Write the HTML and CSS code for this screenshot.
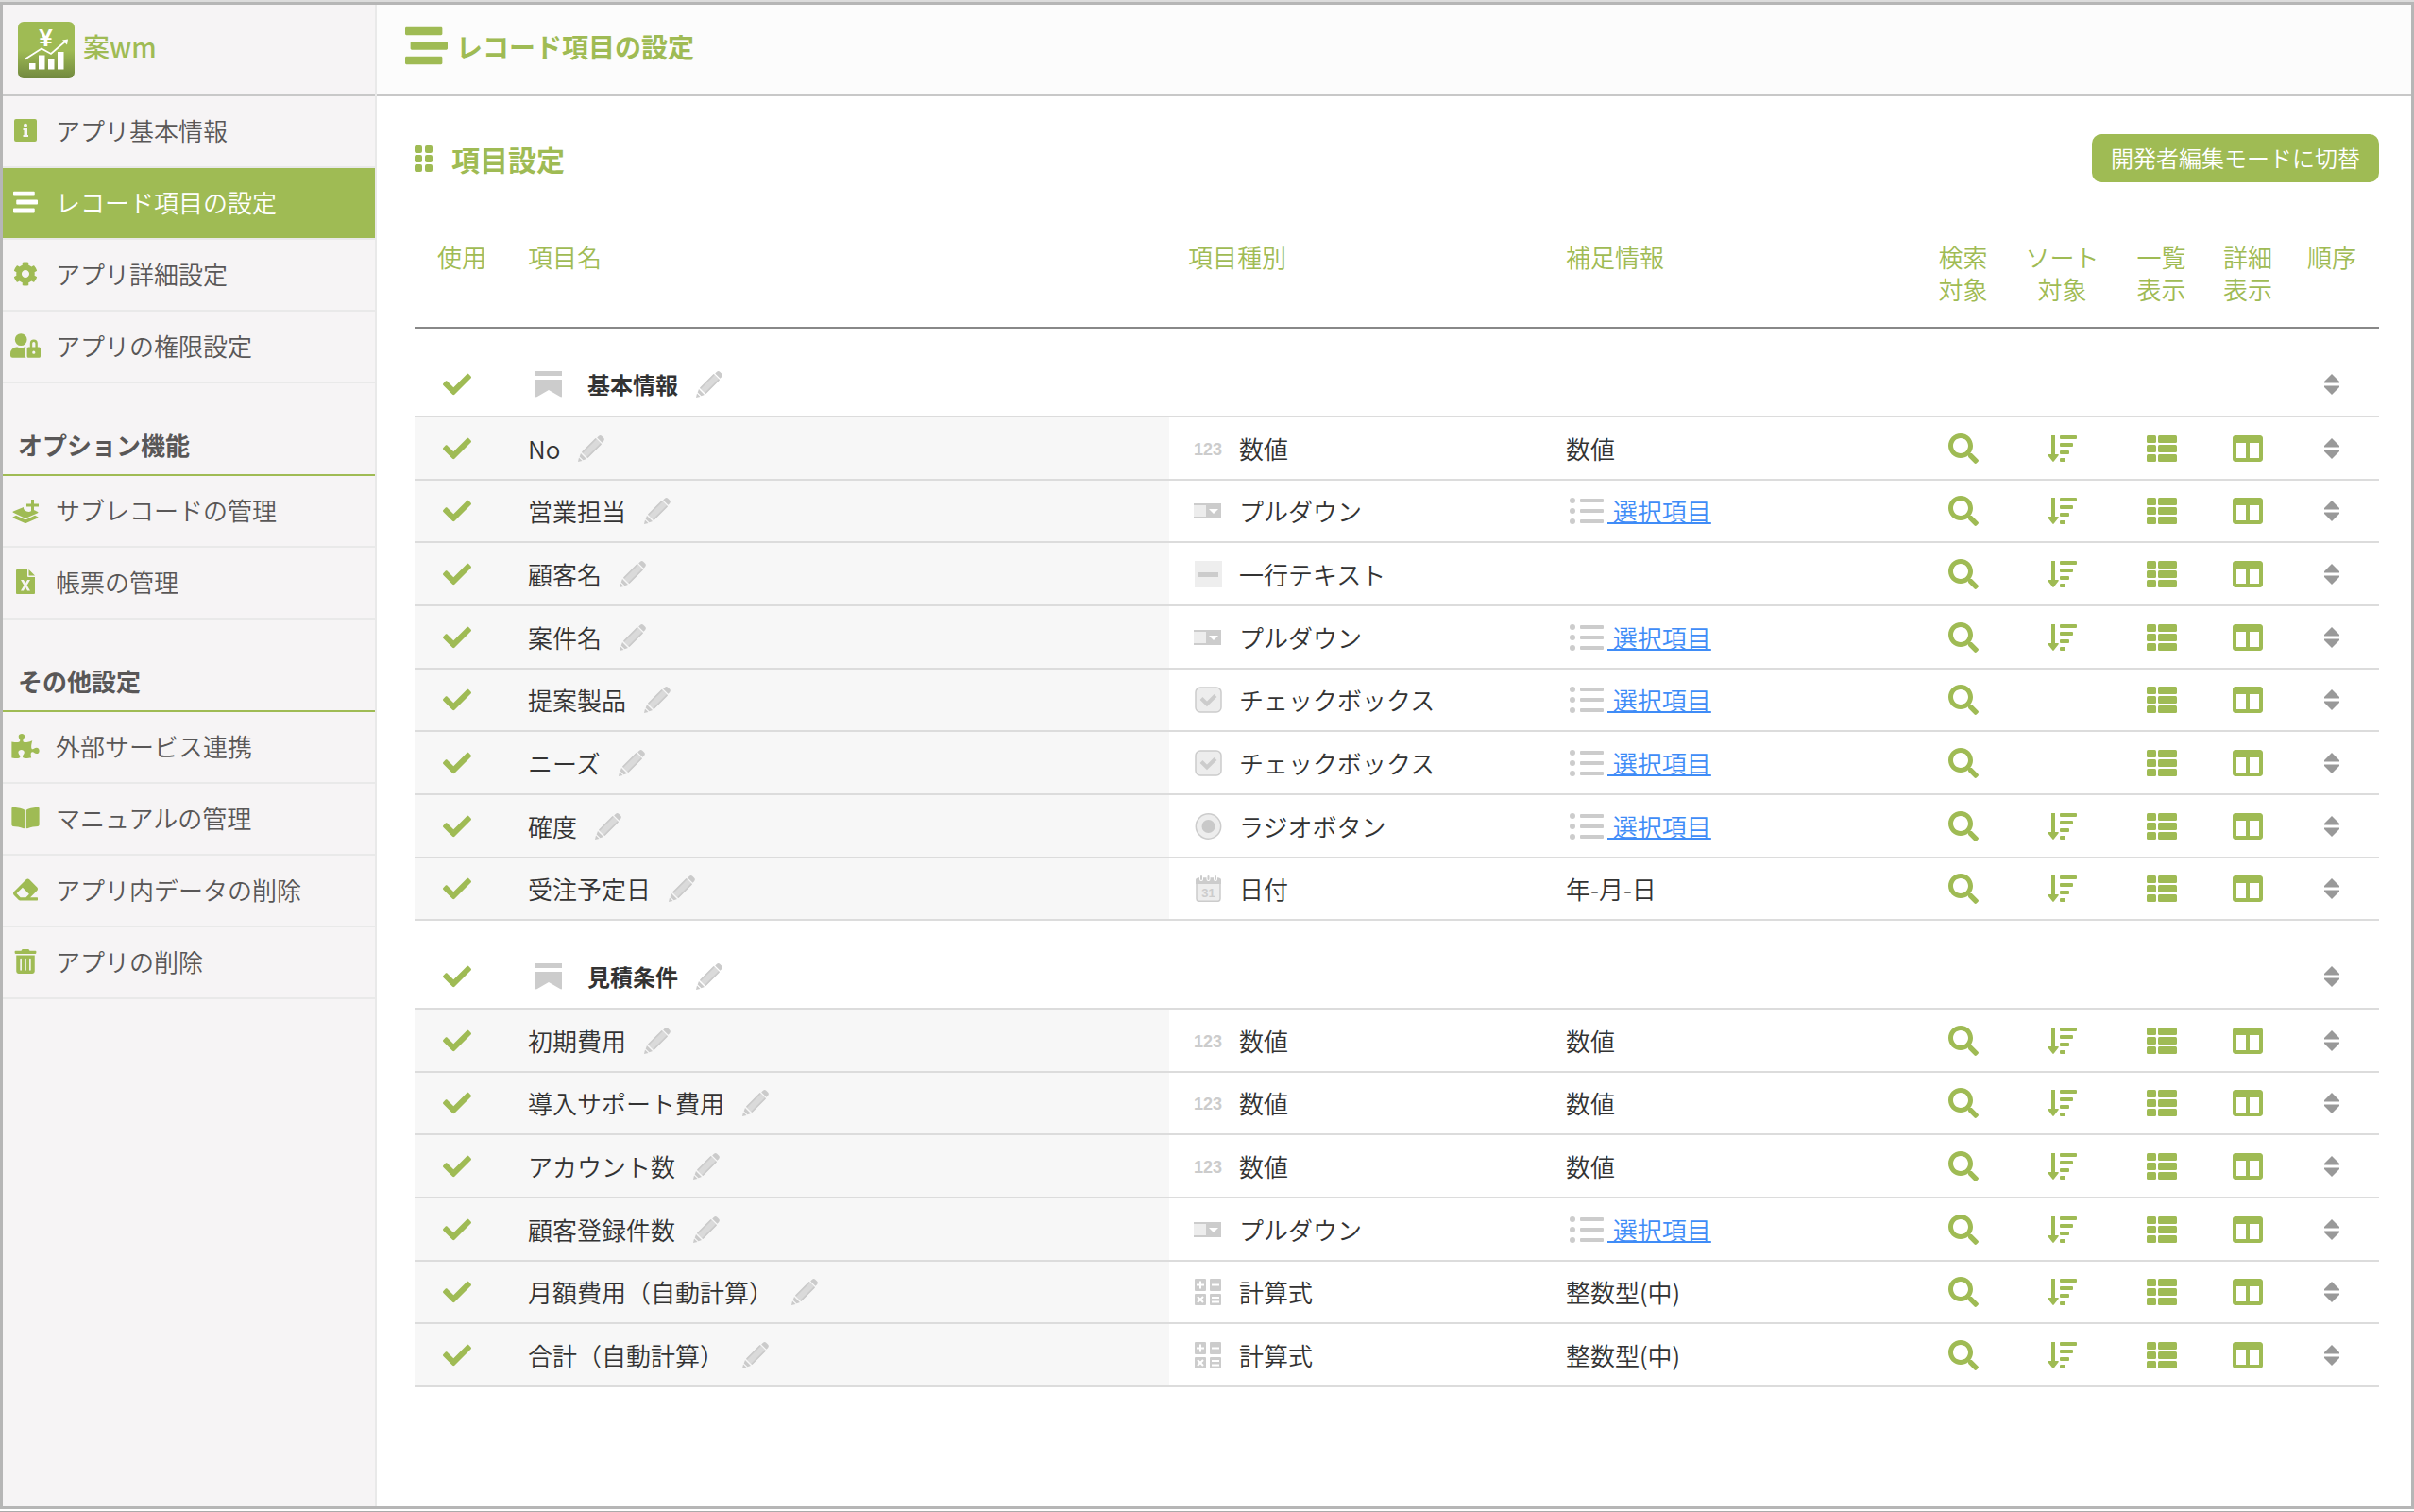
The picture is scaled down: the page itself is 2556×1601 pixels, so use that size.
FILE: index.html
```html
<!DOCTYPE html>
<html lang="ja">
  <head>
    <meta charset="UTF-8" />
    <meta name="viewport" content="width=device-width, initial-scale=1.0" />
    <title>レコード項目の設定</title>
    <link rel="stylesheet" href="styles.css">
  </head>
  <body>
    <!-- Icon definitions -->
    <svg class="icon-defs" aria-hidden="true">
      <symbol id="check" viewBox="0 0 512 512"><path d="M173.898 439.404l-166.4-166.4c-9.997-9.997-9.997-26.206 0-36.204l36.203-36.204c9.997-9.998 26.207-9.998 36.204 0L192 312.69 432.095 72.596c9.997-9.997 26.207-9.997 36.204 0l36.203 36.204c9.997 9.997 9.997 26.206 0 36.204l-294.4 294.401c-9.998 9.997-26.207 9.997-36.204-.001z"/></symbol>
      <symbol id="stream" viewBox="0 0 512 512"><path d="M16 128h416c8.84 0 16-7.16 16-16V48c0-8.84-7.16-16-16-16H16C7.16 32 0 39.16 0 48v64c0 8.84 7.16 16 16 16zm480 80H80c-8.84 0-16 7.16-16 16v64c0 8.84 7.16 16 16 16h416c8.84 0 16-7.16 16-16v-64c0-8.84-7.16-16-16-16zm-64 176H16c-8.84 0-16 7.16-16 16v64c0 8.84 7.16 16 16 16h416c8.84 0 16-7.16 16-16v-64c0-8.84-7.16-16-16-16z"/></symbol>
      <symbol id="info" viewBox="0 0 24 24"><path fill-rule="evenodd" d="M2 0h20a2 2 0 0 1 2 2v20a2 2 0 0 1-2 2H2a2 2 0 0 1-2-2V2a2 2 0 0 1 2-2zM12 4.800a2 2 0 1 0 0 4 2 2 0 0 0 0-4zM9.500 10v2h1v5h-1v2h5.500v-2h-1v-7z"/></symbol>
      <symbol id="cog" viewBox="0 0 512 512"><path d="M487.4 315.7l-42.6-24.6c4.3-23.2 4.3-47 0-70.2l42.6-24.6c4.9-2.8 7.1-8.6 5.5-14-11.1-35.6-30-67.8-54.7-94.6-3.8-4.1-10-5.1-14.8-2.3L380.8 110c-17.9-15.4-38.5-27.3-60.8-35.1V25.8c0-5.6-3.9-10.5-9.4-11.7-36.7-8.2-74.3-7.8-109.2 0-5.5 1.200-9.400 6.100-9.400 11.700V75c-22.200 7.900-42.800 19.800-60.800 35.100L88.700 85.500c-4.900-2.800-11-1.900-14.800 2.300-24.700 26.700-43.600 58.900-54.700 94.600-1.700 5.400.6 11.200 5.500 14L67.300 221c-4.300 23.200-4.300 47 0 70.200l-42.600 24.600c-4.900 2.800-7.100 8.600-5.500 14 11.100 35.600 30 67.800 54.700 94.600 3.800 4.100 10 5.100 14.800 2.300l42.600-24.600c17.900 15.400 38.500 27.300 60.800 35.100v49.200c0 5.600 3.900 10.500 9.400 11.700 36.700 8.200 74.300 7.800 109.200 0 5.500-1.200 9.400-6.100 9.400-11.700v-49.200c22.200-7.900 42.800-19.800 60.800-35.100l42.600 24.600c4.900 2.800 11 1.900 14.800-2.300 24.700-26.700 43.600-58.900 54.700-94.600 1.500-5.500-.7-11.300-5.600-14.100zM256 336c-44.100 0-80-35.900-80-80s35.900-80 80-80 80 35.900 80 80-35.900 80-80 80z"/></symbol>
      <symbol id="user-lock" viewBox="0 0 640 512"><path d="M224 256A128 128 0 1 0 96 128a128 128 0 0 0 128 128zm96 64a63.08 63.08 0 0 1 8.1-30.5c-4.8-.5-9.5-1.5-14.5-1.5h-16.7a174.08 174.08 0 0 1-145.8 0h-16.7A134.43 134.43 0 0 0 0 422.4V464a48 48 0 0 0 48 48h280.9a63.54 63.54 0 0 1-8.9-32zm288-32h-32v-80a80 80 0 0 0-160 0v80h-32a32 32 0 0 0-32 32v160a32 32 0 0 0 32 32h224a32 32 0 0 0 32-32V320a32 32 0 0 0-32-32zM496 432a32 32 0 1 1 32-32 32 32 0 0 1-32 32zm32-144h-64v-80a32 32 0 0 1 64 0z"/></symbol>
      <symbol id="layers" viewBox="0 0 28 28"><path d="M1 15.500 12 11c-.5 3 3 5.500 7 4.800l3-2.300 5 2.500c.6.4.6.8 0 1.200l-12 5.300c-.6.3-1.400.3-2 0L1 16.700c-.6-.4-.6-.8 0-1.200zM4 19.800l8.500 4c1 .4 2 .4 3 0l8.500-4 3 1.400c.6.4.6.8 0 1.200L15 27.700c-.6.3-1.400.3-2 0L1 22.400c-.6-.4-.6-.8 0-1.200zM20 3h3v4.500h5v3h-5V15h-3v-4.500h-5v-3h5z"/></symbol>
      <symbol id="excel" viewBox="0 0 20 26"><path fill-rule="evenodd" d="M1 0h11v7a1 1 0 0 0 1 1h7v17a1 1 0 0 1-1 1H1a1 1 0 0 1-1-1V1a1 1 0 0 1 1-1zM5 11l3.400 5.700L5 22.500h3l2-3.700 2 3.700h3l-3.400-5.800L15 11h-3l-2 3.500L8 11z"/><path d="M13.500 0 20 6.500h-6.500z"/></symbol>
      <symbol id="puzzle" viewBox="0 0 576 512"><path d="M519.442 288.651c-41.519 0-59.5 31.593-82.058 31.593C377.409 320.244 432 144 432 144s-196.288 80-196.288-3.297c0-35.827 36.288-46.25 36.288-85.985C272 19.216 243.885 0 210.539 0c-34.654 0-66.366 18.891-66.366 56.346 0 41.364 31.711 59.277 31.711 81.750C175.885 207.719 0 166.758 0 166.758v333.237s178.635 41.047 178.635-28.662c0-22.473-40-40.107-40-81.471 0-37.456 29.250-56.346 63.577-56.346 33.673 0 61.788 19.216 61.788 54.717 0 39.735-36.288 50.158-36.288 85.985 0 60.803 129.675 25.730 181.230 25.730 0 0-34.725-120.101 25.827-120.101 35.962 0 46.423 36.152 86.308 36.152C556.712 416 576 387.990 576 354.443c0-34.199-18.962-65.792-56.558-65.792z"/></symbol>
      <symbol id="book" viewBox="0 0 576 512"><path d="M542.22 32.05c-54.8 3.11-163.72 14.43-230.96 55.59-4.64 2.84-7.27 7.89-7.27 13.17v363.87c0 11.55 12.63 18.85 23.28 13.49 69.18-34.82 169.23-44.32 218.7-46.92 16.89-.89 30.02-14.43 30.02-30.66V62.75c.01-17.71-15.35-31.74-33.77-30.7zM264.73 87.64C197.5 46.48 88.58 35.17 33.78 32.05 15.36 31.01 0 45.04 0 62.75V400.6c0 16.24 13.13 29.78 30.02 30.66 49.49 2.6 149.59 12.11 218.77 46.95 10.62 5.35 23.21-1.94 23.21-13.46V100.63c0-5.29-2.62-10.14-7.27-12.99z"/></symbol>
      <symbol id="eraser" viewBox="0 0 512 512"><path d="M497.941 273.941c18.745-18.745 18.745-49.137 0-67.882l-160-160c-18.745-18.745-49.136-18.746-67.883 0l-256 256c-18.745 18.745-18.745 49.137 0 67.882l96 96A48.004 48.004 0 0 0 144 480h356c6.627 0 12-5.373 12-12v-40c0-6.627-5.373-12-12-12H355.883l142.058-142.059zm-302.627-62.627l137.373 137.373L265.373 416H150.628l-80-80 124.686-124.686z"/></symbol>
      <symbol id="trash" viewBox="0 0 448 512"><path d="M32 464a48 48 0 0 0 48 48h288a48 48 0 0 0 48-48V128H32zm272-256a16 16 0 0 1 32 0v224a16 16 0 0 1-32 0zm-96 0a16 16 0 0 1 32 0v224a16 16 0 0 1-32 0zm-96 0a16 16 0 0 1 32 0v224a16 16 0 0 1-32 0zM432 32H312l-9.4-18.7A24 24 0 0 0 281.1 0H166.8a23.720 23.720 0 0 0-21.400 13.300L136 32H16A16 16 0 0 0 0 48v32a16 16 0 0 0 16 16h416a16 16 0 0 0 16-16V48a16 16 0 0 0-16-16z"/></symbol>
      <symbol id="grip" viewBox="0 0 20 28"><rect width="8" height="8" rx="2"/><rect x="11" width="8" height="8" rx="2"/><rect y="10" width="8" height="8" rx="2"/><rect x="11" y="10" width="8" height="8" rx="2"/><rect y="20" width="8" height="8" rx="2"/><rect x="11" y="20" width="8" height="8" rx="2"/></symbol>
      <symbol id="bookmark" viewBox="0 0 28 28"><path d="M0 0h28v5H0zM0 9h28v17.500c0 .8-.8 1.200-1.500.8L14 20 1.500 27.300c-.7.4-1.500 0-1.500-.8z"/></symbol>
      <symbol id="pencil" viewBox="0 0 28 28"><path fill="#dadada" d="M4 18 19 3l6 6-15 15z"/><path fill="#cbcbcb" d="M4 17.500 18.500 3l1.200 1.200L5.200 18.700zM9.300 22.800 23.800 8.300l1.200 1.200L10.500 24zM20.200 2.500 22 .8c1-1 2.300-1 3.200 0l2 2c.9.900.9 2.200 0 3.200l-1.700 1.800zM3 19l6 6-3.500 1.200-3.800-3.700zM1 23.500 4.500 27 0 28z"/></symbol>
      <symbol id="pulldown" viewBox="0 0 30 28"><path fill="#ccc" d="M0 6h29v16H0z"/><path fill="#ededed" d="M0 8h13v12H0z"/><path fill="#fff" d="M16 12h10l-5 5z"/></symbol>
      <symbol id="textline" viewBox="0 0 30 28"><path fill="#eee" d="M1 0h29v28H1z"/><path fill="#ccc" d="M4 12h22v5H4z"/></symbol>
      <symbol id="checkbox" viewBox="0 0 30 28"><rect x="2" y="1" width="27" height="26" rx="5" fill="#ededed" stroke="#ccc" stroke-width="1.500"/><path fill="none" stroke="#ccc" stroke-width="4" d="m8 12.500 6 6 9-9"/></symbol>
      <symbol id="radio" viewBox="0 0 30 28"><circle cx="15.500" cy="14" r="13.200" fill="#ededed" stroke="#ccc" stroke-width="1.500"/><circle cx="15.500" cy="14" r="7" fill="#c9c9c9"/></symbol>
      <symbol id="formula" viewBox="0 0 30 28"><path fill="#ccc" d="M2 0h10a1 1 0 0 1 1 1v11a1 1 0 0 1-1 1H2a1 1 0 0 1-1-1V1a1 1 0 0 1 1-1zM18 0h10a1 1 0 0 1 1 1v11a1 1 0 0 1-1 1H18a1 1 0 0 1-1-1V1a1 1 0 0 1 1-1zM2 16h10a1 1 0 0 1 1 1v10a1 1 0 0 1-1 1H2a1 1 0 0 1-1-1V17a1 1 0 0 1 1-1zM18 16h10a1 1 0 0 1 1 1v10a1 1 0 0 1-1 1H18a1 1 0 0 1-1-1V17a1 1 0 0 1 1-1z"/><path stroke="#fff" stroke-width="2" d="M3 6.500h8M7 2.500v8M19 6.500h8M4 19l6 6M10 19l-6 6M19 20h8M19 24.500h8"/></symbol>
      <symbol id="options" viewBox="0 0 36 28"><circle cx="3" cy="3" r="3"/><circle cx="3" cy="14" r="3"/><circle cx="3" cy="25" r="3"/><rect x="11" y="1" width="25" height="4" rx="1"/><rect x="11" y="12" width="25" height="4" rx="1"/><rect x="11" y="23" width="25" height="4" rx="1"/></symbol>
      <symbol id="search" viewBox="0 0 512 512"><path d="M505 442.700L405.300 343c-4.500-4.500-10.600-7-17-7H372c27.600-35.300 44-79.700 44-128C416 93.100 322.900 0 208 0S0 93.100 0 208s93.100 208 208 208c48.300 0 92.700-16.400 128-44v16.300c0 6.400 2.500 12.500 7 17l99.700 99.700c9.400 9.400 24.600 9.400 33.900 0l28.300-28.300c9.400-9.400 9.400-24.600.1-34zM208 336c-70.700 0-128-57.200-128-128 0-70.700 57.200-128 128-128 70.700 0 128 57.200 128 128 0 70.700-57.200 128-128 128z"/></symbol>
      <symbol id="sort" viewBox="0 0 32 32"><path d="M4 2h4v20h3c.8 0 1 .7.600 1.200L6.700 29.500c-.4.500-1 .5-1.400 0L.4 23.200C0 22.700.2 22 1 22h3z"/><rect x="13" y="2" width="18" height="4" rx="1"/><rect x="13" y="10" width="14" height="4" rx="1"/><rect x="13" y="18" width="10" height="4" rx="1"/><rect x="13" y="26" width="6" height="4" rx="1"/></symbol>
      <symbol id="list" viewBox="0 0 32 32"><rect y="2" width="10" height="8" rx="1.500"/><rect x="12" y="2" width="20" height="8" rx="1.500"/><rect y="12" width="10" height="8" rx="1.500"/><rect x="12" y="12" width="20" height="8" rx="1.500"/><rect y="22" width="10" height="8" rx="1.500"/><rect x="12" y="22" width="20" height="8" rx="1.500"/></symbol>
      <symbol id="columns" viewBox="0 0 512 512"><path d="M464 32H48C21.490 32 0 53.490 0 80v352c0 26.510 21.490 48 48 48h416c26.510 0 48-21.490 48-48V80c0-26.510-21.490-48-48-48zM224 416H64V160h160v256zm224 0H288V160h160v256z"/></symbol>
      <symbol id="order" viewBox="0 0 16 22"><path d="M8 0l8 8v1.500H0V8zM0 12.500h16V14l-8 8-8-8z"/></symbol>
    </svg>

    <div class="frame">
      <aside class="sidebar">
        <div class="brand">
          <svg class="logo" viewBox="0 0 60 60" aria-hidden="true">
            <defs>
              <linearGradient id="logo-bg" x1="0" y1="0" x2="0" y2="1">
                <stop offset="0.5" stop-color="#9fbb54"/>
                <stop offset="1" stop-color="#72893f"/>
              </linearGradient>
            </defs>
            <rect width="60" height="60" rx="6" fill="url(#logo-bg)"/>
            <text class="yen" x="29.500" y="26" text-anchor="middle">¥</text>
            <path fill="none" stroke="#fff" stroke-width="1.800" d="m7 40 18-11.500 10 5.500 15-13"/>
            <path fill="#fff" d="m47 19.500 6-1-1 6zM12 44h6.500v6.500H12zM22 35.500h6.500v15H22zM32 39h6.500v11.500H32zM42 32h6.500v18.500H42z"/>
          </svg>
          <span class="brand-name">案wm</span>
        </div>
        <nav>
          <a href="#"><span class="nav-icon"><svg class="i24"><use href="#info"/></svg></span>アプリ基本情報</a>
          <a href="#" class="active" aria-current="page"><span class="nav-icon"><svg class="i26"><use href="#stream"/></svg></span>レコード項目の設定</a>
          <a href="#"><span class="nav-icon"><svg class="i26"><use href="#cog"/></svg></span>アプリ詳細設定</a>
          <a href="#"><span class="nav-icon"><svg class="wide"><use href="#user-lock"/></svg></span>アプリの権限設定</a>
          <h2>オプション機能</h2>
          <a href="#"><span class="nav-icon"><svg class="i28"><use href="#layers"/></svg></span>サブレコードの管理</a>
          <a href="#"><span class="nav-icon"><svg class="i26"><use href="#excel"/></svg></span>帳票の管理</a>
          <h2>その他設定</h2>
          <a href="#"><span class="nav-icon"><svg class="wide"><use href="#puzzle"/></svg></span>外部サービス連携</a>
          <a href="#"><span class="nav-icon"><svg class="wide"><use href="#book"/></svg></span>マニュアルの管理</a>
          <a href="#"><span class="nav-icon"><svg class="i26"><use href="#eraser"/></svg></span>アプリ内データの削除</a>
          <a href="#"><span class="nav-icon"><svg class="i26"><use href="#trash"/></svg></span>アプリの削除</a>
        </nav>
      </aside>

      <div class="page">
        <header class="page-header">
          <svg class="title-icon"><use href="#stream"/></svg>
          <h1>レコード項目の設定</h1>
        </header>
        <main>
          <div class="toolbar">
            <svg class="grip"><use href="#grip"/></svg>
            <h2>項目設定</h2>
            <button type="button" class="mode-button">開発者編集モードに切替</button>
          </div>

          <table class="fields">
            <colgroup>
              <col class="col-use">
              <col>
              <col class="col-type">
              <col class="col-info">
              <col class="col-flag">
              <col class="col-flag">
              <col class="col-flag">
              <col class="col-detail">
              <col class="col-order">
            </colgroup>
            <thead>
              <tr>
                <th class="use">使用</th>
                <th>項目名</th>
                <th>項目種別</th>
                <th>補足情報</th>
                <th class="flag">検索<br>対象</th>
                <th class="flag">ソート<br>対象</th>
                <th class="flag">一覧<br>表示</th>
                <th class="flag">詳細<br>表示</th>
                <th class="flag">順序</th>
              </tr>
            </thead>
            <tbody>
              <tr class="group">
                <td class="use"><svg class="i30"><use href="#check"/></svg></td>
                <td colspan="7"><div class="cell"><svg class="bookmark"><use href="#bookmark"/></svg>基本情報<button type="button" class="edit" aria-label="編集"><svg class="i28"><use href="#pencil"/></svg></button></div></td>
                <td class="flag"><svg class="order"><use href="#order"/></svg></td>
              </tr>
              <tr>
                <td class="use"><svg class="i30"><use href="#check"/></svg></td>
                <td class="name"><div class="cell">No<button type="button" class="edit" aria-label="編集"><svg class="i28"><use href="#pencil"/></svg></button></div></td>
                <td class="type"><div class="cell"><span class="type-icon">123</span>数値</div></td>
                <td>数値</td>
                <td class="flag"><svg class="i32"><use href="#search"/></svg></td>
                <td class="flag"><svg class="i32"><use href="#sort"/></svg></td>
                <td class="flag"><svg class="i32"><use href="#list"/></svg></td>
                <td class="flag"><svg class="i32"><use href="#columns"/></svg></td>
                <td class="flag"><svg class="order"><use href="#order"/></svg></td>
              </tr>
              <tr>
                <td class="use"><svg class="i30"><use href="#check"/></svg></td>
                <td class="name"><div class="cell">営業担当<button type="button" class="edit" aria-label="編集"><svg class="i28"><use href="#pencil"/></svg></button></div></td>
                <td class="type"><div class="cell"><svg class="type-icon"><use href="#pulldown"/></svg>プルダウン</div></td>
                <td><div class="cell"><svg class="options"><use href="#options"/></svg><a href="#">&nbsp;選択項目</a></div></td>
                <td class="flag"><svg class="i32"><use href="#search"/></svg></td>
                <td class="flag"><svg class="i32"><use href="#sort"/></svg></td>
                <td class="flag"><svg class="i32"><use href="#list"/></svg></td>
                <td class="flag"><svg class="i32"><use href="#columns"/></svg></td>
                <td class="flag"><svg class="order"><use href="#order"/></svg></td>
              </tr>
              <tr>
                <td class="use"><svg class="i30"><use href="#check"/></svg></td>
                <td class="name"><div class="cell">顧客名<button type="button" class="edit" aria-label="編集"><svg class="i28"><use href="#pencil"/></svg></button></div></td>
                <td class="type"><div class="cell"><svg class="type-icon"><use href="#textline"/></svg>一行テキスト</div></td>
                <td></td>
                <td class="flag"><svg class="i32"><use href="#search"/></svg></td>
                <td class="flag"><svg class="i32"><use href="#sort"/></svg></td>
                <td class="flag"><svg class="i32"><use href="#list"/></svg></td>
                <td class="flag"><svg class="i32"><use href="#columns"/></svg></td>
                <td class="flag"><svg class="order"><use href="#order"/></svg></td>
              </tr>
              <tr>
                <td class="use"><svg class="i30"><use href="#check"/></svg></td>
                <td class="name"><div class="cell">案件名<button type="button" class="edit" aria-label="編集"><svg class="i28"><use href="#pencil"/></svg></button></div></td>
                <td class="type"><div class="cell"><svg class="type-icon"><use href="#pulldown"/></svg>プルダウン</div></td>
                <td><div class="cell"><svg class="options"><use href="#options"/></svg><a href="#">&nbsp;選択項目</a></div></td>
                <td class="flag"><svg class="i32"><use href="#search"/></svg></td>
                <td class="flag"><svg class="i32"><use href="#sort"/></svg></td>
                <td class="flag"><svg class="i32"><use href="#list"/></svg></td>
                <td class="flag"><svg class="i32"><use href="#columns"/></svg></td>
                <td class="flag"><svg class="order"><use href="#order"/></svg></td>
              </tr>
              <tr>
                <td class="use"><svg class="i30"><use href="#check"/></svg></td>
                <td class="name"><div class="cell">提案製品<button type="button" class="edit" aria-label="編集"><svg class="i28"><use href="#pencil"/></svg></button></div></td>
                <td class="type"><div class="cell"><svg class="type-icon"><use href="#checkbox"/></svg>チェックボックス</div></td>
                <td><div class="cell"><svg class="options"><use href="#options"/></svg><a href="#">&nbsp;選択項目</a></div></td>
                <td class="flag"><svg class="i32"><use href="#search"/></svg></td>
                <td class="flag"></td>
                <td class="flag"><svg class="i32"><use href="#list"/></svg></td>
                <td class="flag"><svg class="i32"><use href="#columns"/></svg></td>
                <td class="flag"><svg class="order"><use href="#order"/></svg></td>
              </tr>
              <tr>
                <td class="use"><svg class="i30"><use href="#check"/></svg></td>
                <td class="name"><div class="cell">ニーズ<button type="button" class="edit" aria-label="編集"><svg class="i28"><use href="#pencil"/></svg></button></div></td>
                <td class="type"><div class="cell"><svg class="type-icon"><use href="#checkbox"/></svg>チェックボックス</div></td>
                <td><div class="cell"><svg class="options"><use href="#options"/></svg><a href="#">&nbsp;選択項目</a></div></td>
                <td class="flag"><svg class="i32"><use href="#search"/></svg></td>
                <td class="flag"></td>
                <td class="flag"><svg class="i32"><use href="#list"/></svg></td>
                <td class="flag"><svg class="i32"><use href="#columns"/></svg></td>
                <td class="flag"><svg class="order"><use href="#order"/></svg></td>
              </tr>
              <tr>
                <td class="use"><svg class="i30"><use href="#check"/></svg></td>
                <td class="name"><div class="cell">確度<button type="button" class="edit" aria-label="編集"><svg class="i28"><use href="#pencil"/></svg></button></div></td>
                <td class="type"><div class="cell"><svg class="type-icon"><use href="#radio"/></svg>ラジオボタン</div></td>
                <td><div class="cell"><svg class="options"><use href="#options"/></svg><a href="#">&nbsp;選択項目</a></div></td>
                <td class="flag"><svg class="i32"><use href="#search"/></svg></td>
                <td class="flag"><svg class="i32"><use href="#sort"/></svg></td>
                <td class="flag"><svg class="i32"><use href="#list"/></svg></td>
                <td class="flag"><svg class="i32"><use href="#columns"/></svg></td>
                <td class="flag"><svg class="order"><use href="#order"/></svg></td>
              </tr>
              <tr>
                <td class="use"><svg class="i30"><use href="#check"/></svg></td>
                <td class="name"><div class="cell">受注予定日<button type="button" class="edit" aria-label="編集"><svg class="i28"><use href="#pencil"/></svg></button></div></td>
                <td class="type">
                  <div class="cell">
                    <svg class="type-icon" viewBox="0 0 30 28">
                      <rect x="3" y="3" width="25" height="24.300" rx="2.500" fill="#ededed" stroke="#ccc" stroke-width="1.500"/>
                      <path d="M2 9V5a2 2 0 0 1 2-2h23a2 2 0 0 1 2 2v4z"/>
                      <path stroke="#fff" stroke-width="4" stroke-linecap="round" d="M8 1v3M15.500 1v3M23 1v3"/>
                      <path stroke="#ccc" stroke-width="2" stroke-linecap="round" d="M8 1v3M15.500 1v3M23 1v3"/>
                      <text class="day" x="15.500" y="23" text-anchor="middle">31</text>
                    </svg>日付
                  </div>
                </td>
                <td>年-月-日</td>
                <td class="flag"><svg class="i32"><use href="#search"/></svg></td>
                <td class="flag"><svg class="i32"><use href="#sort"/></svg></td>
                <td class="flag"><svg class="i32"><use href="#list"/></svg></td>
                <td class="flag"><svg class="i32"><use href="#columns"/></svg></td>
                <td class="flag"><svg class="order"><use href="#order"/></svg></td>
              </tr>
            </tbody>
            <tbody>
              <tr class="group">
                <td class="use"><svg class="i30"><use href="#check"/></svg></td>
                <td colspan="7"><div class="cell"><svg class="bookmark"><use href="#bookmark"/></svg>見積条件<button type="button" class="edit" aria-label="編集"><svg class="i28"><use href="#pencil"/></svg></button></div></td>
                <td class="flag"><svg class="order"><use href="#order"/></svg></td>
              </tr>
              <tr>
                <td class="use"><svg class="i30"><use href="#check"/></svg></td>
                <td class="name"><div class="cell">初期費用<button type="button" class="edit" aria-label="編集"><svg class="i28"><use href="#pencil"/></svg></button></div></td>
                <td class="type"><div class="cell"><span class="type-icon">123</span>数値</div></td>
                <td>数値</td>
                <td class="flag"><svg class="i32"><use href="#search"/></svg></td>
                <td class="flag"><svg class="i32"><use href="#sort"/></svg></td>
                <td class="flag"><svg class="i32"><use href="#list"/></svg></td>
                <td class="flag"><svg class="i32"><use href="#columns"/></svg></td>
                <td class="flag"><svg class="order"><use href="#order"/></svg></td>
              </tr>
              <tr>
                <td class="use"><svg class="i30"><use href="#check"/></svg></td>
                <td class="name"><div class="cell">導入サポート費用<button type="button" class="edit" aria-label="編集"><svg class="i28"><use href="#pencil"/></svg></button></div></td>
                <td class="type"><div class="cell"><span class="type-icon">123</span>数値</div></td>
                <td>数値</td>
                <td class="flag"><svg class="i32"><use href="#search"/></svg></td>
                <td class="flag"><svg class="i32"><use href="#sort"/></svg></td>
                <td class="flag"><svg class="i32"><use href="#list"/></svg></td>
                <td class="flag"><svg class="i32"><use href="#columns"/></svg></td>
                <td class="flag"><svg class="order"><use href="#order"/></svg></td>
              </tr>
              <tr>
                <td class="use"><svg class="i30"><use href="#check"/></svg></td>
                <td class="name"><div class="cell">アカウント数<button type="button" class="edit" aria-label="編集"><svg class="i28"><use href="#pencil"/></svg></button></div></td>
                <td class="type"><div class="cell"><span class="type-icon">123</span>数値</div></td>
                <td>数値</td>
                <td class="flag"><svg class="i32"><use href="#search"/></svg></td>
                <td class="flag"><svg class="i32"><use href="#sort"/></svg></td>
                <td class="flag"><svg class="i32"><use href="#list"/></svg></td>
                <td class="flag"><svg class="i32"><use href="#columns"/></svg></td>
                <td class="flag"><svg class="order"><use href="#order"/></svg></td>
              </tr>
              <tr>
                <td class="use"><svg class="i30"><use href="#check"/></svg></td>
                <td class="name"><div class="cell">顧客登録件数<button type="button" class="edit" aria-label="編集"><svg class="i28"><use href="#pencil"/></svg></button></div></td>
                <td class="type"><div class="cell"><svg class="type-icon"><use href="#pulldown"/></svg>プルダウン</div></td>
                <td><div class="cell"><svg class="options"><use href="#options"/></svg><a href="#">&nbsp;選択項目</a></div></td>
                <td class="flag"><svg class="i32"><use href="#search"/></svg></td>
                <td class="flag"><svg class="i32"><use href="#sort"/></svg></td>
                <td class="flag"><svg class="i32"><use href="#list"/></svg></td>
                <td class="flag"><svg class="i32"><use href="#columns"/></svg></td>
                <td class="flag"><svg class="order"><use href="#order"/></svg></td>
              </tr>
              <tr>
                <td class="use"><svg class="i30"><use href="#check"/></svg></td>
                <td class="name"><div class="cell">月額費用（自動計算）<button type="button" class="edit" aria-label="編集"><svg class="i28"><use href="#pencil"/></svg></button></div></td>
                <td class="type"><div class="cell"><svg class="type-icon"><use href="#formula"/></svg>計算式</div></td>
                <td>整数型(中)</td>
                <td class="flag"><svg class="i32"><use href="#search"/></svg></td>
                <td class="flag"><svg class="i32"><use href="#sort"/></svg></td>
                <td class="flag"><svg class="i32"><use href="#list"/></svg></td>
                <td class="flag"><svg class="i32"><use href="#columns"/></svg></td>
                <td class="flag"><svg class="order"><use href="#order"/></svg></td>
              </tr>
              <tr>
                <td class="use"><svg class="i30"><use href="#check"/></svg></td>
                <td class="name"><div class="cell">合計（自動計算）<button type="button" class="edit" aria-label="編集"><svg class="i28"><use href="#pencil"/></svg></button></div></td>
                <td class="type"><div class="cell"><svg class="type-icon"><use href="#formula"/></svg>計算式</div></td>
                <td>整数型(中)</td>
                <td class="flag"><svg class="i32"><use href="#search"/></svg></td>
                <td class="flag"><svg class="i32"><use href="#sort"/></svg></td>
                <td class="flag"><svg class="i32"><use href="#list"/></svg></td>
                <td class="flag"><svg class="i32"><use href="#columns"/></svg></td>
                <td class="flag"><svg class="order"><use href="#order"/></svg></td>
              </tr>
            </tbody>
          </table>
        </main>
      </div>
    </div>
  </body>
</html>
```
FILE: styles.css
```css
* {
  padding: 0;
  margin: 0;
  box-sizing: border-box;
}
body {
  min-height: 100vh;
  display: flex;
  flex-direction: column;
  padding-bottom: 2px;
  border-top: 2px solid #dcdcdc;
  border-bottom: 1px solid #aaa;
  background: #fff;
  color: #333;
  font-family: "Noto Sans CJK JP", sans-serif;
  font-size: 26px;
  font-weight: 350;
  line-height: 34px;
}
svg {
  display: block;
  fill: currentColor;
}
.icon-defs {
  position: absolute;
  width: 0;
  height: 0;
}
.frame {
  flex: 1;
  display: grid;
  grid-template-columns: 396px 1fr;
  border: 3px solid #b6b6b6;
}

/* Icon sizes */
.i24 {
  width: 24px;
  height: 24px;
}
.i26 {
  width: 26px;
  height: 26px;
}
.i28 {
  width: 28px;
  height: 28px;
}
.i30 {
  width: 30px;
  height: 30px;
}
.i32 {
  width: 32px;
  height: 32px;
}
.wide {
  width: 32px;
  height: 26px;
}

/* Sidebar */
.sidebar {
  background: #f6f4f5;
  border-right: 2px solid #e9e9e9;
}
.brand {
  height: 97px;
  display: flex;
  align-items: center;
  gap: 9px;
  padding: 0 16px;
  border-bottom: 2px solid #c8c8c8;
  color: #9fbb54;
  font-size: 28px;
  font-weight: 500;
}
.brand-name {
  padding-bottom: 8px;
}
.logo {
  width: 60px;
  height: 60px;
}
.yen {
  fill: #fff;
  font-family: "Liberation Sans", sans-serif;
  font-size: 26px;
  font-weight: bold;
}
.sidebar nav a {
  height: 76px;
  display: flex;
  align-items: center;
  gap: 8px;
  padding-bottom: 3px;
  border-bottom: 2px solid #e9e9e9;
  color: #595757;
  text-decoration: none;
}
.sidebar nav .active {
  background: #9fbb54;
  background-clip: padding-box;
  color: #fff;
}
.nav-icon {
  width: 48px;
  display: flex;
  justify-content: center;
  color: #9fbb54;
}
.active .nav-icon {
  color: #fff;
}
.sidebar h2 {
  height: 98px;
  display: flex;
  align-items: flex-end;
  padding: 0 16px 14px;
  border-bottom: 2px solid #9fbb54;
  color: #595757;
  font-size: 26px;
  font-weight: 700;
}

/* Page */
.page-header {
  height: 97px;
  display: flex;
  align-items: center;
  gap: 9px;
  padding: 0 30px 8px;
  background: #fcfcfc;
  border-bottom: 2px solid #c8c8c8;
  color: #9fbb54;
}
.page-header h1 {
  font-size: 28px;
  font-weight: 700;
}
.title-icon {
  width: 45px;
  height: 45px;
}
main {
  padding: 40px 34px 40px 40px;
}
.toolbar {
  display: flex;
  align-items: center;
  gap: 19px;
  color: #9fbb54;
}
.toolbar h2 {
  font-size: 30px;
  font-weight: 700;
}
.grip {
  width: 20px;
  height: 28px;
}
.mode-button {
  height: 51px;
  margin-left: auto;
  padding: 0 20px 2px;
  border: 0;
  border-radius: 10px;
  background: #9fbb54;
  color: #fff;
  font: inherit;
  font-size: 24px;
  cursor: pointer;
}

/* Field table */
.fields {
  width: 100%;
  margin-top: 40px;
  table-layout: fixed;
  border-spacing: 0;
}
.col-use,
.col-order {
  width: 100px;
}
.col-type {
  width: 400px;
}
.col-info {
  width: 388px;
}
.col-flag {
  width: 105px;
}
.col-detail {
  width: 78px;
}
.fields th {
  padding: 22px 0 23px 20px;
  border-bottom: 2px solid #888;
  color: #9fbb54;
  font-weight: 350;
  text-align: left;
  vertical-align: top;
}
.fields th.use {
  padding-left: 24px;
}
.fields th.flag {
  padding-left: 0;
  text-align: center;
}
.fields td {
  height: 67px;
  padding-left: 20px;
  border-bottom: 2px solid #dcdcdc;
}
.fields tr:nth-child(3n) td {
  height: 66px;
}
.fields td.use {
  padding-left: 30px;
  background: #f7f7f7;
  color: #9fbb54;
}
.fields .name {
  background: #f7f7f7;
}
.fields .type {
  padding-left: 26px;
}
.fields td.flag {
  padding: 0;
  color: #9fbb54;
}
.fields td.flag svg {
  margin: 0 auto;
}
.fields .group td {
  height: 94px;
  padding-top: 26px;
  background: none;
  font-size: 24px;
  font-weight: 700;
}
.cell {
  display: flex;
  align-items: center;
}
.cell a {
  color: #3f8cf7;
  text-decoration-thickness: 2px;
}
.edit {
  margin-left: 19px;
  border: 0;
  background: none;
  cursor: pointer;
}
.bookmark {
  width: 28px;
  height: 28px;
  margin: 0 27px 0 8px;
  color: #ccc;
}
.type-icon {
  width: 30px;
  height: 28px;
  margin-right: 18px;
  color: #ccc;
  font-family: "Liberation Sans", sans-serif;
  font-size: 18px;
  font-weight: bold;
  line-height: 30px;
}
.day {
  font-size: 13px;
}
.options {
  width: 36px;
  height: 28px;
  margin: 0 4px;
  color: #ccc;
}
.fields td .order {
  width: 16px;
  height: 22px;
  color: #999;
}
```
